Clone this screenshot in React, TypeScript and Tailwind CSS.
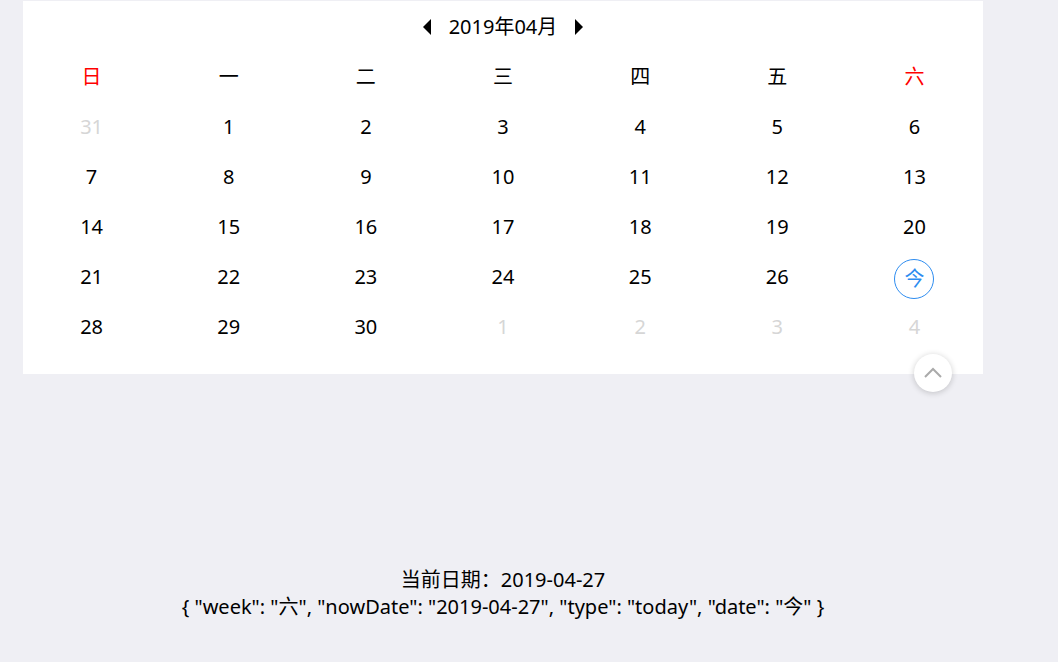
import React from 'react';

const WEEK = ['日', '一', '二', '三', '四', '五', '六'];

type Cell = { label: string; type: 'prev' | 'cur' | 'next' | 'today' };

function buildDays(): Cell[] {
  const cells: Cell[] = [{ label: '31', type: 'prev' }];
  for (let d = 1; d <= 30; d++) {
    cells.push({ label: d === 27 ? '今' : String(d), type: d === 27 ? 'today' : 'cur' });
  }
  for (let d = 1; d <= 4; d++) cells.push({ label: String(d), type: 'next' });
  return cells;
}

export default function App() {
  const days = buildDays();
  const font = { fontFamily: '"Noto Sans", "Noto Sans CJK SC", sans-serif' };

  return (
    <div className="w-[1058px] h-[662px] bg-[#efeff4] text-black" style={font}>
      <div className="w-[1006px] pt-px px-[23px]">
        <div className="relative bg-white pb-[22px]">
          {/* header */}
          <div className="h-[51px] flex items-center justify-center gap-[18px]">
            <svg width="8" height="16" viewBox="0 0 8 16">
              <path d="M8 0 L0 8 L8 16 Z" fill="#000" />
            </svg>
            <span className="text-[20px] leading-none">2019年04月</span>
            <svg width="8" height="16" viewBox="0 0 8 16">
              <path d="M0 0 L8 8 L0 16 Z" fill="#000" />
            </svg>
          </div>

          {/* week titles */}
          <div className="grid grid-cols-7">
            {WEEK.map((w, i) => (
              <div
                key={w}
                className={`h-[50px] flex items-center justify-center text-[20px] leading-none ${
                  i === 0 || i === 6 ? 'text-[#ff0000]' : 'text-black'
                }`}
              >
                {w}
              </div>
            ))}
          </div>

          {/* days */}
          <div className="grid grid-cols-7">
            {days.map((c, i) => (
              <div key={i} className="h-[50px] flex items-center justify-center text-[20px] leading-none">
                {c.type === 'today' ? (
                  <span className="w-[40px] h-[40px] mt-[4px] rounded-full border border-[#2d8cf0] text-[#2d8cf0] flex items-center justify-center">
                    {c.label}
                  </span>
                ) : (
                  <span className={c.type === 'cur' ? 'text-black' : 'text-[#d6d6d6]'}>{c.label}</span>
                )}
              </div>
            ))}
          </div>

          {/* collapse button */}
          <button className="absolute left-[891px] top-[353px] w-[38px] h-[38px] rounded-full bg-white shadow-[0_1px_6px_rgba(0,0,0,0.2)] flex items-center justify-center">
            <svg width="20" height="12" viewBox="0 0 20 12">
              <path d="M2 10 L10 2 L18 10" fill="none" stroke="#aaa" strokeWidth="2" />
            </svg>
          </button>
        </div>

        <div className="mt-[192px] text-center text-[20px] leading-[27px]">
          <div>当前日期：2019-04-27</div>
          <div>{'{ "week": "六", "nowDate": "2019-04-27", "type": "today", "date": "今" }'}</div>
        </div>
      </div>
    </div>
  );
}
